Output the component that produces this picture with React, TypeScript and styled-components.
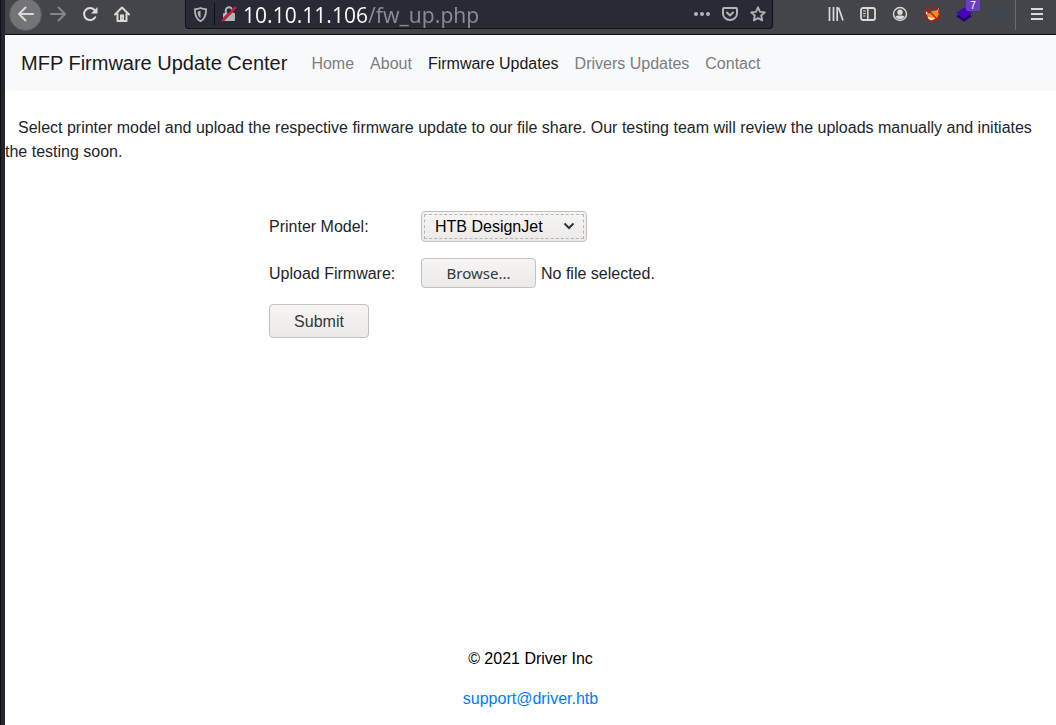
import React, { useRef, useState } from "react";
import styled, { createGlobalStyle } from "styled-components";

const GlobalStyle = createGlobalStyle`
  *, *::before, *::after { box-sizing: border-box; }
  body {
    margin: 0;
    background: #fff;
    color: #212529;
    font: 16px/24px "Liberation Sans", Arial, sans-serif;
  }
`;

const WindowEdge = styled.div`
  border-left: 1px solid #0f1016;
`;

const Page = styled.div`
  display: flex;
  flex-direction: column;
  min-height: 100vh;
  border-left: 4px solid #23252f;
`;

const Toolbar = styled.header`
  display: flex;
  align-items: flex-start;
  height: 35px;
  padding: 0 3px 0 4px;
  overflow: hidden;
  background: #44454b;
  border-bottom: 1px solid #0c0c0d;
`;

const ToolGroup = styled.div`
  display: flex;
  height: 28px;
  align-items: center;
`;

const ToolButton = styled.button<{ $round?: boolean; $dim?: boolean }>`
  flex: none;
  display: grid;
  place-items: center;
  width: ${(p) => (p.$round ? "33px" : "32px")};
  height: ${(p) => (p.$round ? "33px" : "32px")};
  padding: 0;
  border: ${(p) => (p.$round ? "1px solid #5a5b60" : "0")};
  border-radius: 50%;
  background: ${(p) => (p.$round ? "#737478" : "transparent")};
  color: ${(p) => (p.$dim ? "#85868a" : "#dadada")};
`;

const AddressBar = styled.div`
  flex: 1;
  display: flex;
  align-items: center;
  min-width: 0;
  height: 29px;
  margin: 0 47px;
  background: #282a36;
  border: 1px solid #111218;
  border-top: 0;
  border-radius: 0 0 4px 4px;
`;

const BarButton = styled.button`
  flex: none;
  display: grid;
  place-items: center;
  width: 28px;
  height: 28px;
  padding: 0;
  border: 0;
  background: none;
  color: #b4b4b8;
`;

const BarDivider = styled.span`
  width: 1px;
  height: 22px;
  background: #0e0f14;
`;

const AddressInput = styled.input`
  flex: 1;
  min-width: 0;
  height: 28px;
  padding: 2px 0 0;
  border: 0;
  outline: 0;
  font: 21px/26px "Noto Sans", sans-serif;
  color: transparent;
  background: linear-gradient(90deg, #f9f9fa 124px, #8b8c92 124px);
  -webkit-background-clip: text;
  background-clip: text;
`;

const ExtensionButton = styled(ToolButton)`
  position: relative;
`;

const Badge = styled.span`
  position: absolute;
  top: 2px;
  right: 0;
  width: 14px;
  height: 11px;
  border-radius: 0 0 2px 2px;
  background: #6b3fc0;
  color: #fff;
  font: 10px/11px "Liberation Sans", sans-serif;
  text-align: center;
`;

const ToolDivider = styled.span`
  width: 1px;
  height: 32px;
  margin: 0 5px 0 3px;
  background: #6a6b70;
`;

const Navbar = styled.nav`
  display: flex;
  align-items: center;
  min-height: 56px;
  padding: 8px 16px;
  background: #f8f9fa;
`;

const Brand = styled.a`
  margin-right: 16px;
  font-size: 20px;
  line-height: 30px;
  white-space: nowrap;
  color: #1a1a1b;
  text-decoration: none;
`;

const NavLink = styled.a<{ $active?: boolean }>`
  padding: 9px 8px 7px;
  white-space: nowrap;
  color: ${(p) => (p.$active ? "#191919" : "#7c7d7d")};
  text-decoration: none;
`;

const Main = styled.main`
  flex: 1;
  padding-top: 25px;
`;

const Intro = styled.p`
  margin: 0 0 47px;
  text-indent: 13px;
`;

const UploadForm = styled.form`
  display: grid;
  grid-template-columns: 152px 1fr;
  align-items: center;
  row-gap: 16px;
  max-width: 523px;
  margin: 0 auto;
`;

const FieldLabel = styled.label`
  padding-top: 1px;
`;

const Control = styled.div`
  display: flex;
  align-items: center;
  gap: 5px;
`;

const FileName = styled.span`
  padding-top: 1px;
`;

const SelectFrame = styled.div`
  position: relative;
  width: 166px;
  height: 31px;
`;

const ModelSelect = styled.select`
  appearance: none;
  width: 100%;
  height: 100%;
  padding: 0 32px 0 13px;
  border: 1px solid #c4c0bc;
  border-radius: 4px;
  outline: 1px dashed #b4b4b2;
  outline-offset: -4px;
  background: linear-gradient(#f6f5f4, #ebeae8);
  color: #000;
  font: 16px/24px "Liberation Sans", Arial, sans-serif;
`;

const SelectArrow = styled.svg`
  position: absolute;
  top: 10px;
  right: 12px;
  pointer-events: none;
`;

const PushButton = styled.button<{ $browse?: boolean }>`
  width: ${(p) => (p.$browse ? "115px" : "100px")};
  height: ${(p) => (p.$browse ? "30px" : "34px")};
  padding: ${(p) => (p.$browse ? "0" : "2px 0 0")};
  border: 1px solid #c4c0bc;
  border-radius: 4px;
  background: linear-gradient(#f6f5f4, #ebeae8);
  color: #33383b;
  font-family: ${(p) =>
    p.$browse ? '"Noto Sans", sans-serif' : '"Liberation Sans", Arial, sans-serif'};
  font-size: ${(p) => (p.$browse ? "15px" : "16px")};
`;

const Footer = styled.footer`
  padding-bottom: 14px;
  color: #000;
  text-align: center;
`;

const FooterLine = styled.p`
  margin: 16px 0 0;
`;

const MailLink = styled.a`
  color: #007bff;
  text-decoration: none;
`;

type IconProps = { children: React.ReactNode; size?: number };
const Icon = ({ children, size = 16 }: IconProps) => (
  <svg
    width={size}
    height={size}
    viewBox="0 0 16 16"
    fill="none"
    stroke="currentColor"
    strokeWidth="2"
    strokeLinecap="round"
    strokeLinejoin="round"
    aria-hidden="true"
  >
    {children}
  </svg>
);

const links = ["Home", "About", "Firmware Updates", "Drivers Updates", "Contact"];
const models = ["HTB DesignJet", "HTB Ecotank", "HTB Laserjet Pro", "HTB Mono"];

function BrowserToolbar() {
  return (
    <Toolbar>
      <ToolGroup>
        <ToolButton $round aria-label="Back">
          <Icon><path d="M15 8H1.5M7.5 1.5 1 8l6.500 6.500" /></Icon>
        </ToolButton>
        <ToolButton $dim aria-label="Forward">
          <Icon><path d="M1 8h13.500M8.500 1.500 15 8l-6.500 6.500" /></Icon>
        </ToolButton>
        <ToolButton aria-label="Reload">
          <Icon>
            <path d="M13.200 11.200A6 6 0 1 1 12.500 4" />
            <path d="M15.500 1v6.500H9z" fill="currentColor" stroke="none" />
          </Icon>
        </ToolButton>
        <ToolButton aria-label="Home">
          <Icon>
            <path d="M1 8.500 8 1.500l7 7M3.500 8v7h9V8" />
            <path d="M6 15V8.500h4V15z" fill="currentColor" stroke="none" />
            <path d="M8 11.500v1" stroke="#44454b" strokeWidth="1" strokeLinecap="butt" />
          </Icon>
        </ToolButton>
      </ToolGroup>
      <AddressBar>
        <BarButton aria-label="Tracking protection">
          <Icon size={15}>
            <path d="M8 1c2 .9 4 1.300 6 1.300 0 6-1.500 10.700-6 12.700-4.500-2-6-6.700-6-12.700C4 2.300 6 1.900 8 1z" strokeWidth="1.900" />
            <path d="M8 4v8C5.800 10.600 5 8 5 4.900 6 4.800 7 4.500 8 4z" fill="currentColor" stroke="none" />
          </Icon>
        </BarButton>
        <BarDivider />
        <BarButton aria-label="Connection is not secure">
          <Icon>
            <path d="M4.800 7V4.500a3.200 3.200 0 0 1 6.400 0V7" />
            <rect x="2" y="7" width="12" height="8" rx="1" fill="currentColor" stroke="none" />
            <path d="M1.500 14.500l13-13" stroke="#282a36" strokeWidth="2.800" />
            <path d="M1.500 14.500l13-13" stroke="#e8143f" strokeWidth="1.900" />
          </Icon>
        </BarButton>
        <AddressInput aria-label="Address" defaultValue="10.10.11.106/fw_up.php" spellCheck={false} />
        <BarButton aria-label="Page actions">
          <Icon>
            <g fill="currentColor" stroke="none">
              <circle cx="2" cy="8" r="2" /><circle cx="8" cy="8" r="2" /><circle cx="14" cy="8" r="2" />
            </g>
          </Icon>
        </BarButton>
        <BarButton aria-label="Save to Pocket">
          <Icon><path d="M2 2h12a1 1 0 0 1 1 1v4.500a7 6.500 0 0 1-14 0V3a1 1 0 0 1 1-1zM5 6.500l3 3 3-3" /></Icon>
        </BarButton>
        <BarButton aria-label="Bookmark this page">
          <Icon><path d="M8 1.300l2 4.500 4.800.5-3.600 3.200 1 4.900L8 12l-4.200 2.400 1-4.900L1.200 6.300 6 5.800z" strokeWidth="1.800" /></Icon>
        </BarButton>
      </AddressBar>
      <ToolGroup>
        <ToolButton aria-label="Library">
          <Icon><path d="M1.500 1v14M5.500 1v14M9.200 1v14M10.500 1.500l4.500 13" strokeWidth="1.700" strokeLinecap="butt" /></Icon>
        </ToolButton>
        <ToolButton aria-label="Sidebars">
          <Icon>
            <rect x="1" y="2" width="14" height="12" rx="2" strokeWidth="1.800" />
            <path d="M7.800 2v12" strokeWidth="1.500" />
            <path d="M3.500 5h2M3.500 7.500h2M3.500 10h1.500" strokeWidth="1" />
          </Icon>
        </ToolButton>
        <ToolButton aria-label="Account">
          <Icon>
            <circle cx="8" cy="8" r="6.500" strokeWidth="1.400" />
            <circle cx="8" cy="6.300" r="2.700" fill="currentColor" stroke="none" />
            <path d="M3.500 10.500c1.200-.8 2-1 2.800-1h3.400c.8 0 1.600.2 2.800 1-1 1.700-2.500 2.700-4.500 2.700s-3.500-1-4.500-2.700z" fill="currentColor" stroke="none" />
          </Icon>
        </ToolButton>
        <ToolButton aria-label="FoxyProxy">
          <Icon>
            <path d="M2 6 5 7.500 8 5l4-.5L15 3l.2 5.500-2.700 4-4 1.500-4.500-2z" fill="#ed8b25" stroke="none" />
            <path d="M1 4.500 3.500 6.500 2.500 9zM14.500 2l.7 4-2.500-1zM4 11l3 .5 1.500.5 2.500-1-1.500 2.500-2.500 1-2.500-1.500z" fill="#f3e3cb" stroke="none" />
            <circle cx="8" cy="8" r="7.300" stroke="#cc1010" strokeWidth="1.200" />
            <path d="M3 3l10 10" stroke="#cc1010" strokeWidth="1.200" />
          </Icon>
        </ToolButton>
        <ExtensionButton aria-label="Wappalyzer, 7 technologies">
          <Icon>
            <path d="M0 10.200 8 5.200l8 5-8 5.600z" fill="#230070" stroke="none" />
            <path d="M0 7 8 1.500 16 7l-8 6z" fill="#4805b5" stroke="none" />
          </Icon>
          <Badge>7</Badge>
        </ExtensionButton>
        <ToolButton aria-label="Extension">
          <Icon>
            <g stroke="#3b4859" strokeWidth="1.200">
              <path d="M8 1l6 3.500v7L8 15l-6-3.500v-7zM2 4.500l6 3.500 6-3.500M8 8v7M2 11.500 8 8l6 3.500M8 1v7" />
              <circle cx="8" cy="8" r="2.500" />
            </g>
          </Icon>
        </ToolButton>
        <ToolDivider />
        <ToolButton aria-label="Menu">
          <Icon><path d="M2 3h12M2 8h12M2 13h12" strokeLinecap="butt" /></Icon>
        </ToolButton>
      </ToolGroup>
    </Toolbar>
  );
}

export default function App() {
  const fileInput = useRef<HTMLInputElement>(null);
  const [fileName, setFileName] = useState("No file selected.");

  return (
    <WindowEdge>
      <GlobalStyle />
      <Page>
        <BrowserToolbar />
        <Navbar>
          <Brand href="#">MFP Firmware Update Center</Brand>
          {links.map((label) => (
            <NavLink key={label} href="#" $active={label === "Firmware Updates"}>
              {label}
            </NavLink>
          ))}
        </Navbar>
        <Main>
          <Intro>
            Select printer model and upload the respective firmware update to our file share. Our
            testing team will review the uploads manually and initiates the testing soon.
          </Intro>
          <UploadForm onSubmit={(e) => e.preventDefault()}>
            <FieldLabel htmlFor="printer">Printer Model:</FieldLabel>
            <SelectFrame>
              <ModelSelect id="printer">
                {models.map((m) => (
                  <option key={m}>{m}</option>
                ))}
              </ModelSelect>
              <SelectArrow width="12" height="10" viewBox="0 0 12 10" fill="none" stroke="#2e3436" strokeWidth="2" aria-hidden="true">
                <path d="M1.500 2.500 6 7l4.500-4.500" />
              </SelectArrow>
            </SelectFrame>
            <FieldLabel htmlFor="firmware">Upload Firmware:</FieldLabel>
            <Control>
              <input
                id="firmware"
                type="file"
                hidden
                ref={fileInput}
                onChange={(e) => setFileName(e.target.files?.[0]?.name ?? "No file selected.")}
              />
              <PushButton type="button" $browse onClick={() => fileInput.current?.click()}>
                Browse...
              </PushButton>
              <FileName>{fileName}</FileName>
            </Control>
            <PushButton type="submit">Submit</PushButton>
          </UploadForm>
        </Main>
        <Footer>
          <FooterLine>© 2021 Driver Inc</FooterLine>
          <FooterLine>
            <MailLink href="mailto:support@driver.htb">support@driver.htb</MailLink>
          </FooterLine>
        </Footer>
      </Page>
    </WindowEdge>
  );
}
